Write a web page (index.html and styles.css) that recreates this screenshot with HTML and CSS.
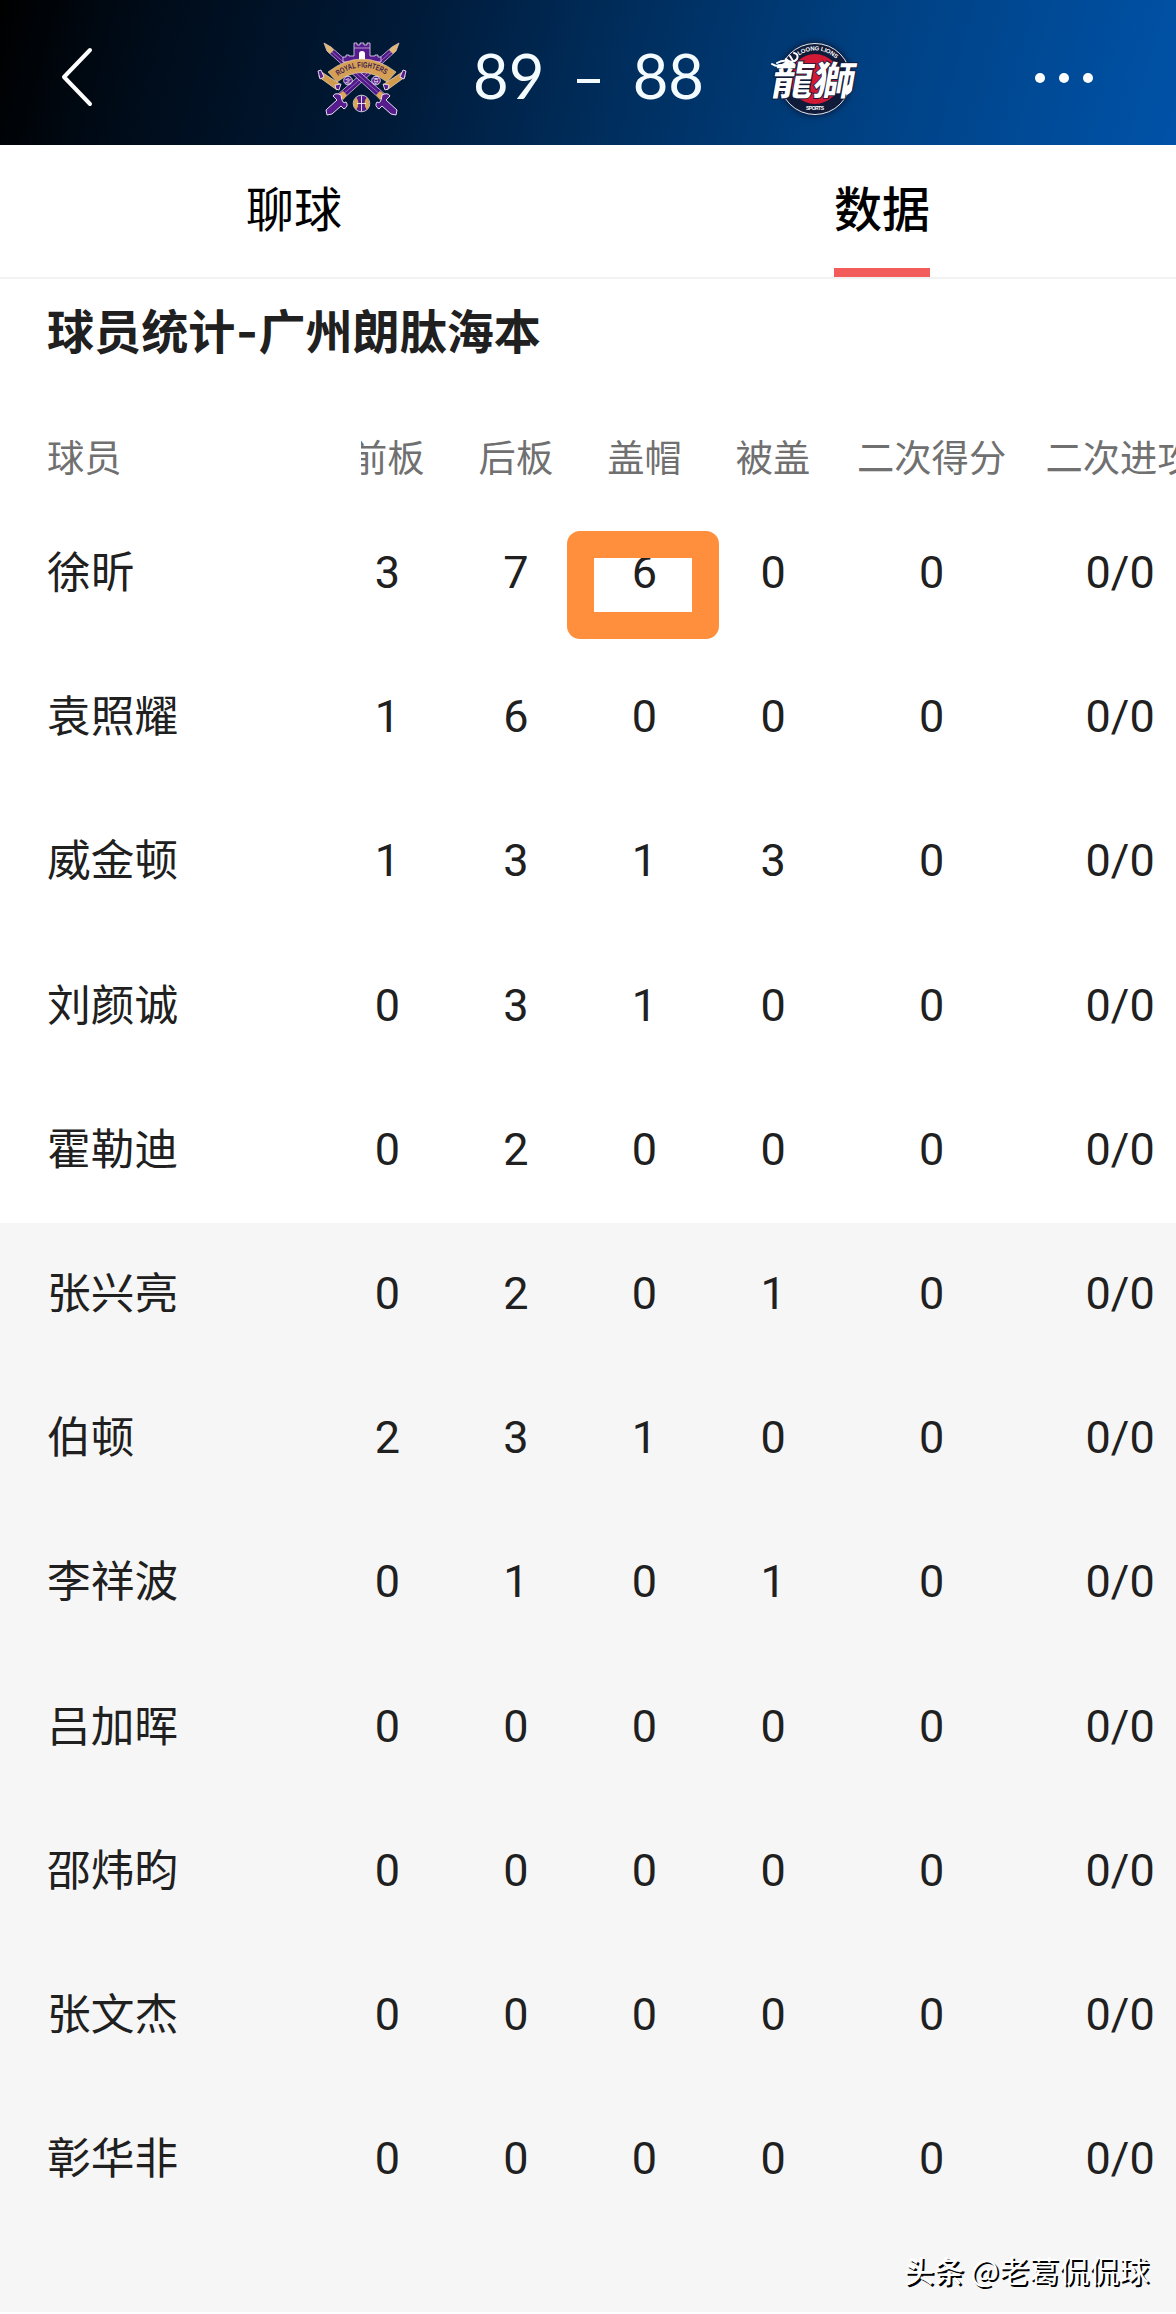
FILE: index.html
```html
<!DOCTYPE html>
<html lang="zh-CN">
<head>
  <meta charset="utf-8">
  <title>球员统计</title>
  <link rel="stylesheet" href="styles.css">
</head>
<body>
  <header class="topbar">
    <svg class="back" viewBox="0 0 36 62" width="36" height="62">
      <path d="M31 4 L5 31 L31 58" fill="none" stroke="#fff" stroke-width="4" stroke-linecap="round" stroke-linejoin="round"/>
    </svg>
    <div class="match">
      <svg class="logo" viewBox="0 0 120 100" width="120" height="100">
        <defs>
          <path id="ribbon" d="M38 46 Q62 29 88 46"/>
          <g id="sword">
            <path d="M24 13 L31 17 L86 65 L80 69 L27 21 Z" fill="#4f1787" stroke="#e9dff2" stroke-width=".7"/>
            <path d="M24 13 L31 17 L34 20 L30 24 L27 21 Z" fill="#e0b878"/>
            <path d="M32 22 L82 66" stroke="#b79bd0" stroke-width=".6"/>
            <path d="M76 65 L80 61 L85 65 L80 70 Z" fill="#dba858"/>
            <path d="M82 65 Q88 62 90 66 Q88 68 86 70 L97 80 L96 85 L91 84 L82 76 L79 79 Q74 76 77 72 Q81 75 82 65 Z" fill="#561b8d" stroke="#e9dff2" stroke-width="1"/>
          </g>
        </defs>
        <use href="#sword" transform="matrix(-1 0 0 1 123 0)"/>
        <use href="#sword"/>
        <path d="M43 32 V27 H46 V25 H49 V26 H54 V13 H57 V15 H60 V13 H64 V15 H67 V13 H70 V26 H75 V25 H78 V27 H81 V32 Z" fill="#561b8d" stroke="#e9dff2" stroke-width=".8"/>
        <path d="M54 18 H70" stroke="#cdb7e0" stroke-width=".8"/>
        <path d="M59 31 V24 Q59 21 62 21 Q65 21 65 24 V31 Z" fill="#fff"/>
        <path d="M20 41 L40 54 L37 60 L19 47 Z M104 41 L84 54 L87 60 L105 47 Z" fill="#d29a4b" stroke="#f1dfc7" stroke-width=".7"/>
        <path d="M28 42 Q62 16 96 42 L87 52 Q62 33 37 52 Z" fill="#d5a056" stroke="#f0ddc0" stroke-width=".6"/>
        <path d="M18 41 L21 40 L24 47 L20 49 Z M106 41 L103 40 L100 47 L104 49 Z M35 55 L41 54 L39 60 L36 59 Z M89 55 L83 54 L85 60 L88 59 Z" fill="#561b8d" stroke="#efe6f6" stroke-width=".9"/>
        <text class="ribbon-text"><textPath href="#ribbon" textLength="51" lengthAdjust="spacingAndGlyphs">ROYAL FIGHTERS</textPath></text>
        <circle cx="48" cy="50.5" r="4.3" fill="#561b8d" stroke="#fff" stroke-width=".8"/>
        <text class="tiny" x="48" y="52.8">北</text>
        <circle cx="76" cy="50.5" r="4.3" fill="#561b8d" stroke="#fff" stroke-width=".8"/>
        <text class="tiny" x="76" y="52.8">京</text>
        <circle cx="61.5" cy="73.5" r="8.3" fill="#561b8d" stroke="#eee" stroke-width=".8"/>
        <path d="M56 67 Q61 73 56 80 Q51 74 56 67 M67 67 Q62 73 67 80 Q72 74 67 67" fill="#dba858"/>
        <path d="M61.5 65.5 V81.5 M57 73.5 H66" stroke="#eee" stroke-width=".9"/>
      </svg>
      <div class="score">
        <span>89</span>
        <i class="dash"></i>
        <span>88</span>
      </div>
      <svg class="logo" viewBox="0 0 120 100" width="120" height="100">
        <defs>
          <path id="ringTop" d="M49 25.5 A29 29 0 0 1 92 38"/>
        </defs>
        <circle class="halo" cx="65" cy="49" r="37"/>
        <circle cx="65" cy="49" r="35.5" fill="#101a39" stroke="#fff" stroke-width=".9"/>
        <circle cx="65" cy="49" r="25" fill="#d21935"/>
        <text class="ring-text"><textPath href="#ringTop" textLength="40">LOONG LIONS</textPath></text>
        <text class="ring-text small" x="56" y="80" textLength="18">SPORTS</text>
        <g transform="translate(20 64.5) skewX(-10) scale(1 .92)">
          <text class="lion" x="0" y="0" textLength="83" lengthAdjust="spacingAndGlyphs">龍獅</text>
        </g>
        <path d="M22 34 Q28 38 34 34 L44 34 M27 33 Q36 28 43 34 M36 29 Q42 35 47 29 Q49 24 44 23 M40 26 L43 31" fill="none" stroke="#fff" stroke-width="2" stroke-linecap="round"/>
        <path d="M101 53 Q104 62 97 65 Q92 63 95 57" fill="#fff"/>
      </svg>
    </div>
    <svg class="more" viewBox="0 0 60 12" width="60" height="12">
      <circle cx="6" cy="6" r="5" fill="#fff"/>
      <circle cx="30" cy="6" r="5" fill="#fff"/>
      <circle cx="54" cy="6" r="5" fill="#fff"/>
    </svg>
  </header>

  <nav class="tabs">
    <div class="tab"><span>聊球</span></div>
    <div class="tab active"><span>数据</span></div>
  </nav>

  <main>
    <h2 class="title">球员统计<span class="hyphen">-</span>广州朗肽海本</h2>

    <div class="row head">
      <div class="player">球员</div>
      <div class="stats"><span>前板</span><span>后板</span><span>盖帽</span><span>被盖</span><span class="wide">二次得分</span><span class="wide">二次进攻</span></div>
    </div>

    <div class="starters">
      <div class="row">
        <div class="player">徐昕</div>
        <div class="stats"><span>3</span><span>7</span><span class="marked">6</span><span>0</span><span class="wide">0</span><span class="wide">0/0</span></div>
      </div>
      <div class="row">
        <div class="player">袁照耀</div>
        <div class="stats"><span>1</span><span>6</span><span>0</span><span>0</span><span class="wide">0</span><span class="wide">0/0</span></div>
      </div>
      <div class="row">
        <div class="player">威金顿</div>
        <div class="stats"><span>1</span><span>3</span><span>1</span><span>3</span><span class="wide">0</span><span class="wide">0/0</span></div>
      </div>
      <div class="row">
        <div class="player">刘颜诚</div>
        <div class="stats"><span>0</span><span>3</span><span>1</span><span>0</span><span class="wide">0</span><span class="wide">0/0</span></div>
      </div>
      <div class="row">
        <div class="player">霍勒迪</div>
        <div class="stats"><span>0</span><span>2</span><span>0</span><span>0</span><span class="wide">0</span><span class="wide">0/0</span></div>
      </div>
    </div>

    <div class="bench">
      <div class="row">
        <div class="player">张兴亮</div>
        <div class="stats"><span>0</span><span>2</span><span>0</span><span>1</span><span class="wide">0</span><span class="wide">0/0</span></div>
      </div>
      <div class="row">
        <div class="player">伯顿</div>
        <div class="stats"><span>2</span><span>3</span><span>1</span><span>0</span><span class="wide">0</span><span class="wide">0/0</span></div>
      </div>
      <div class="row">
        <div class="player">李祥波</div>
        <div class="stats"><span>0</span><span>1</span><span>0</span><span>1</span><span class="wide">0</span><span class="wide">0/0</span></div>
      </div>
      <div class="row">
        <div class="player">吕加晖</div>
        <div class="stats"><span>0</span><span>0</span><span>0</span><span>0</span><span class="wide">0</span><span class="wide">0/0</span></div>
      </div>
      <div class="row">
        <div class="player">邵炜昀</div>
        <div class="stats"><span>0</span><span>0</span><span>0</span><span>0</span><span class="wide">0</span><span class="wide">0/0</span></div>
      </div>
      <div class="row">
        <div class="player">张文杰</div>
        <div class="stats"><span>0</span><span>0</span><span>0</span><span>0</span><span class="wide">0</span><span class="wide">0/0</span></div>
      </div>
      <div class="row">
        <div class="player">彰华非</div>
        <div class="stats"><span>0</span><span>0</span><span>0</span><span>0</span><span class="wide">0</span><span class="wide">0/0</span></div>
      </div>
      <p class="credit"><b>头条</b> @老葛侃侃球</p>
    </div>
  </main>
</body>
</html>
```

FILE: styles.css
```css
* {
  box-sizing: border-box;
}

body {
  margin: 0;
  width: 1176px;
  height: 2314px;
  overflow: hidden;
  background: #fff;
  color: #202020;
  font-family: "Noto Sans CJK SC", sans-serif;
}

/* score bar */
.topbar {
  display: flex;
  align-items: center;
  height: 145px;
  padding: 12px 0 0 59px;
  background: linear-gradient(105deg, #000 0%, #000b18 12%, #001a38 34%, #002c5a 51%, #004081 72%, #0052a8 100%);
}

.back {
  margin-top: -3px;
}

.match {
  display: flex;
  align-items: center;
  margin-left: 205px;
}

.logo {
  margin-top: 3px;
}

.score {
  display: flex;
  align-items: center;
  justify-content: space-between;
  width: 231px;
  margin: -7px 46px 0 53px;
  color: #f4fbff;
  font-family: Lato, sans-serif;
  font-size: 61.5px;
  line-height: 80px;
}

.dash {
  width: 23px;
  height: 4px;
  margin-top: 12px;
  background: #f4fbff;
}

.ribbon-text {
  fill: #43204d;
  font: bold 8px "Liberation Sans", sans-serif;
}

.tiny {
  fill: #fff;
  font-size: 6px;
  text-anchor: middle;
}

.ring-text {
  fill: #fff;
  font: bold 6px "Liberation Sans", sans-serif;
}

.small {
  font-size: 5px;
}

.halo {
  fill: #0a1a3a;
  filter: blur(3px);
}

.lion {
  fill: #fff;
  stroke: #101a39;
  stroke-width: 2px;
  paint-order: stroke;
  font: bold 43px "Noto Sans CJK TC", sans-serif;
}

.more {
  margin: -2px 0 0 164px;
}

/* tabs */
.tabs {
  display: flex;
  height: 134px;
  border-bottom: 2px solid #f2f2f2;
}

.tab {
  display: flex;
  flex: 1;
  justify-content: center;
  color: #000;
  font-size: 48px;
  line-height: 123px;
}

.active span {
  height: 132px;
  border-bottom: 9px solid #f25c5a;
  font-weight: 500;
}

.title {
  height: 136px;
  margin: 0;
  padding: 15px 0 0 47px;
  font-size: 47.1px;
  font-weight: bold;
  line-height: 70px;
}

.hyphen {
  display: inline-block;
  width: 23px;
  font-family: Inter, sans-serif;
  text-align: center;
}

/* player table */
.row {
  display: flex;
  height: 144.2px;
  padding-left: 47px;
  font-size: 43.7px;
  line-height: 134px;
}

.head {
  height: 87px;
  color: #707070;
  font-size: 37.3px;
  line-height: 83px;
}

.player {
  flex: none;
  width: 314px;
}

.stats {
  display: flex;
  flex: 1;
  overflow: hidden;
  font-family: Roboto, "Noto Sans CJK SC", sans-serif;
  font-size: 45px;
  line-height: 141px;
}

.head .stats {
  font-family: inherit;
  font-size: inherit;
  line-height: inherit;
}

.stats span {
  flex: none;
  width: 128.6px;
  text-align: center;
}

.stats span:first-child {
  margin-left: -38px;
}

.stats .wide {
  width: 188.5px;
}

.marked {
  position: relative;
}

.marked::after {
  content: "";
  box-sizing: border-box;
  position: absolute;
  left: -13px;
  top: 29px;
  width: 152px;
  height: 108px;
  border: 27px solid #ff8f3c;
  border-radius: 13px;
}

.bench {
  height: 1089px;
  background: #f6f6f6;
}

.credit {
  margin: 0;
  padding: 15px 27px 0 0;
  color: #fff;
  font-size: 30px;
  line-height: 44px;
  text-align: right;
  text-shadow: 2px 2px 0 #000;
}

.credit b {
  font-weight: 500;
}
```
